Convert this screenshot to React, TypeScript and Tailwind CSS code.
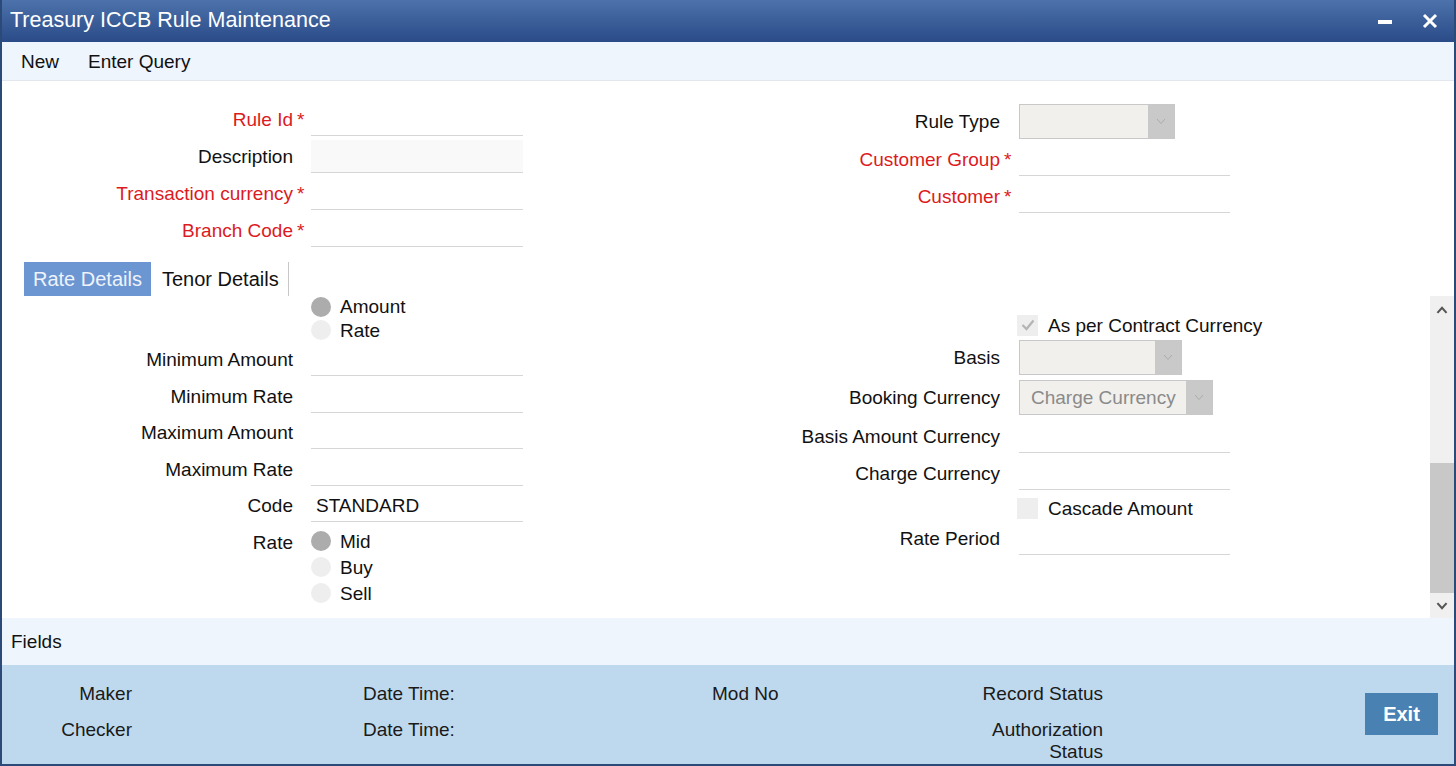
import React from 'react';

const FONT = { fontFamily: '"Liberation Sans", Arial, sans-serif' };

const Req: React.FC = () => <span className="text-[#dc1a22]">*</span>;

interface FieldRowProps {
  label: string;
  required?: boolean;
  labelW: string;
  astW: string;
  inputW: string;
  shaded?: boolean;
  value?: string;
  className?: string;
}

const FieldRow: React.FC<FieldRowProps> = ({
  label,
  required,
  labelW,
  astW,
  inputW,
  shaded,
  value,
  className = '',
}) => (
  <div className={`flex h-[33px] ${className}`}>
    <div
      className={`${labelW} flex items-center justify-end ${
        required ? 'text-[#dc1a22]' : 'text-[#111]'
      }`}
    >
      {label}
    </div>
    <div className={`${astW} flex items-center pl-[4px] text-[#dc1a22]`}>
      {required ? <Req /> : null}
    </div>
    <div
      className={`${inputW} h-[33px] border-b border-[#d6d6d6] flex items-center pl-[5px] text-[#111] ${
        shaded ? 'bg-[#f9f9f9]' : ''
      }`}
    >
      {value}
    </div>
  </div>
);

const Chevron: React.FC<{ up?: boolean; color?: string; w?: number }> = ({
  up,
  color = '#a8a8a8',
  w = 10,
}) => (
  <svg width={w} height={w / 2 + 2} viewBox="0 0 10 7">
    <polyline
      points={up ? '1,6 5,1.5 9,6' : '1,1 5,5.5 9,1'}
      fill="none"
      stroke={color}
      strokeWidth={up ? 1.8 : 0.9}
    />
  </svg>
);

const Select: React.FC<{ w: string; value?: string }> = ({ w, value }) => (
  <div className={`${w} h-[35px] flex border border-[#c8c8c8] bg-[#f1f0ec]`}>
    <div className="flex-1 flex items-center pl-[11px] text-[#8a8a8a] whitespace-nowrap">
      {value}
    </div>
    <div className="w-[26px] bg-[#c9c9c9] flex items-center justify-center">
      <Chevron />
    </div>
  </div>
);

const Radio: React.FC<{ label: string; on?: boolean; h?: string }> = ({
  label,
  on,
  h = 'h-[26px]',
}) => (
  <div className={`flex ${h} items-center`}>
    <div
      className={`w-[20px] h-[20px] rounded-full ${on ? 'bg-[#acacac]' : 'bg-[#eeeeee]'}`}
    />
    <span className="ml-[9px] text-[#111]">{label}</span>
  </div>
);

const Check: React.FC<{ label: string; checked?: boolean }> = ({ label, checked }) => (
  <div className="flex h-[26px] items-center">
    <div className="w-[21px] h-[21px] bg-[#eeeeee] flex items-center justify-center">
      {checked ? (
        <svg width="14" height="12" viewBox="0 0 14 12">
          <polyline points="1.5,6 5.5,10 12.5,1.5" fill="none" stroke="#b4b4b4" strokeWidth="2.2" />
        </svg>
      ) : null}
    </div>
    <span className="ml-[10px] text-[#111]">{label}</span>
  </div>
);

const L = { labelW: 'w-[291px]', astW: 'w-[18px]', inputW: 'w-[212px]' };
const R = { labelW: 'w-[477px]', astW: 'w-[19px]', inputW: 'w-[211px]' };

export default function App() {
  return (
    <div
      className="w-[1456px] h-[766px] flex flex-col bg-white overflow-hidden text-[19px] leading-none"
      style={FONT}
    >
      {/* title bar */}
      <div className="h-[42px] shrink-0 bg-linear-to-b from-[#4d72ab] to-[#2a4b88] flex items-center pl-[10px] pr-[16px] border-x-2 border-[#2c4a78]">
        <div className="text-white text-[21.5px] -ml-[2px]">Treasury ICCB Rule Maintenance</div>
        <div className="ml-auto flex items-center gap-[30px]">
          <div className="w-[14px] h-[4px] bg-white mt-[2px]" />
          <svg width="16" height="16" viewBox="0 0 16 16">
            <path d="M2 2 L14 14 M14 2 L2 14" stroke="white" strokeWidth="3" />
          </svg>
        </div>
      </div>

      <div className="flex-1 flex flex-col border-x-2 border-b-2 border-[#2c4a78] min-h-0">
        {/* toolbar */}
        <div className="h-[39px] shrink-0 bg-[#eef5fd] border-b border-[#e2e7ee] flex items-center pl-[19px] gap-[29px] text-[#111]">
          <span>New</span>
          <span>Enter Query</span>
        </div>

        {/* header fields */}
        <div className="flex pt-[22px] shrink-0">
          <div className="flex flex-col gap-[4px]">
            <FieldRow label="Rule Id" required {...L} />
            <FieldRow label="Description" shaded {...L} />
            <FieldRow label="Transaction currency" required {...L} />
            <FieldRow label="Branch Code" required {...L} />
          </div>
          <div className="flex flex-col mt-[1px]">
            <div className="flex h-[35px]">
              <div className="w-[477px] flex items-center justify-end text-[#111]">Rule Type</div>
              <div className="w-[19px]" />
              <Select w="w-[156px]" />
            </div>
            <FieldRow label="Customer Group" required {...R} className="mt-[4px]" />
            <FieldRow label="Customer" required {...R} className="mt-[4px]" />
          </div>
        </div>

        {/* tabs */}
        <div className="flex h-[34px] mt-[15px] ml-[22px] shrink-0 text-[20px]">
          <div className="bg-[#6b96d2] text-[#eef3fb] flex items-center px-[9px]">Rate Details</div>
          <div className="flex items-center pl-[11px] pr-[9px] border-r border-[#c8c8c8] text-[#111]">
            Tenor Details
          </div>
        </div>

        {/* tab body */}
        <div className="flex-1 flex min-h-0">
          <div className="flex-1 flex overflow-hidden">
            <div className="flex flex-col w-[521px]">
              <div className="pl-[309px]">
                <Radio label="Amount" on h="h-[21px]" />
                <Radio label="Rate" />
              </div>
              <FieldRow label="Minimum Amount" {...L} />
              <FieldRow label="Minimum Rate" {...L} className="mt-[4px]" />
              <FieldRow label="Maximum Amount" {...L} className="mt-[3px]" />
              <FieldRow label="Maximum Rate" {...L} className="mt-[4px]" />
              <FieldRow label="Code" value="STANDARD" {...L} className="mt-[3px]" />
              <div className="flex mt-[6px]">
                <div className="w-[291px] text-right text-[#111] leading-[26px] pt-[2px]">Rate</div>
                <div className="w-[18px]" />
                <div className="flex flex-col">
                  <Radio label="Mid" on />
                  <Radio label="Buy" />
                  <Radio label="Sell" />
                </div>
              </div>
            </div>

            <div className="flex flex-col">
              <div className="mt-[16px] pl-[494px]">
                <Check label="As per Contract Currency" checked />
              </div>
              <div className="flex h-[35px] mt-[2px]">
                <div className="w-[477px] flex items-center justify-end text-[#111]">Basis</div>
                <div className="w-[19px]" />
                <Select w="w-[163px]" />
              </div>
              <div className="flex h-[35px] mt-[5px]">
                <div className="w-[477px] flex items-center justify-end text-[#111]">Booking Currency</div>
                <div className="w-[19px]" />
                <Select w="w-[194px]" value="Charge Currency" />
              </div>
              <FieldRow label="Basis Amount Currency" {...R} className="mt-[5px]" />
              <FieldRow label="Charge Currency" {...R} className="mt-[4px]" />
              <div className="mt-[5px] pl-[494px]">
                <Check label="Cascade Amount" />
              </div>
              <FieldRow label="Rate Period" {...R} className="mt-[1px]" />
            </div>
          </div>

          {/* scrollbar */}
          <div className="w-[24px] bg-[#f0f0f0] flex flex-col">
            <div className="h-[28px] flex items-center justify-center">
              <Chevron up color="#555" w={12} />
            </div>
            <div className="h-[139px]" />
            <div className="h-[130px] bg-[#c8c8c8]" />
            <div className="flex-1 flex items-center justify-center">
              <svg width="12" height="8" viewBox="0 0 10 7">
                <polyline points="1,1 5,5.5 9,1" fill="none" stroke="#555" strokeWidth="1.8" />
              </svg>
            </div>
          </div>
        </div>

        {/* fields bar */}
        <div className="h-[47px] shrink-0 bg-[#eef5fd] flex items-center pl-[9px] text-[#111]">Fields</div>

        {/* audit footer */}
        <div className="h-[99px] shrink-0 bg-[#bed9ee] flex text-[#1a1a1a]">
          <div className="w-[130px] flex flex-col items-end pt-[17px]">
            <div className="h-[22px] flex items-center">Maker</div>
            <div className="h-[22px] flex items-center mt-[14px]">Checker</div>
          </div>
          <div className="w-[231px]" />
          <div className="w-[349px] flex flex-col pt-[17px]">
            <div className="h-[22px] flex items-center">Date Time:</div>
            <div className="h-[22px] flex items-center mt-[14px]">Date Time:</div>
          </div>
          <div className="w-[200px] flex flex-col pt-[17px]">
            <div className="h-[22px] flex items-center">Mod No</div>
          </div>
          <div className="w-[191px] flex flex-col items-end pt-[17px] text-right">
            <div className="h-[22px] flex items-center">Record Status</div>
            <div className="h-[22px] flex items-center mt-[14px]">Authorization</div>
            <div className="h-[22px] flex items-center">Status</div>
          </div>
          <div className="w-[262px]" />
          <div className="w-[73px] h-[42px] mt-[28px] bg-[#4a81b3] text-white font-bold text-[20px] flex items-center justify-center">
            Exit
          </div>
        </div>
      </div>
    </div>
  );
}
